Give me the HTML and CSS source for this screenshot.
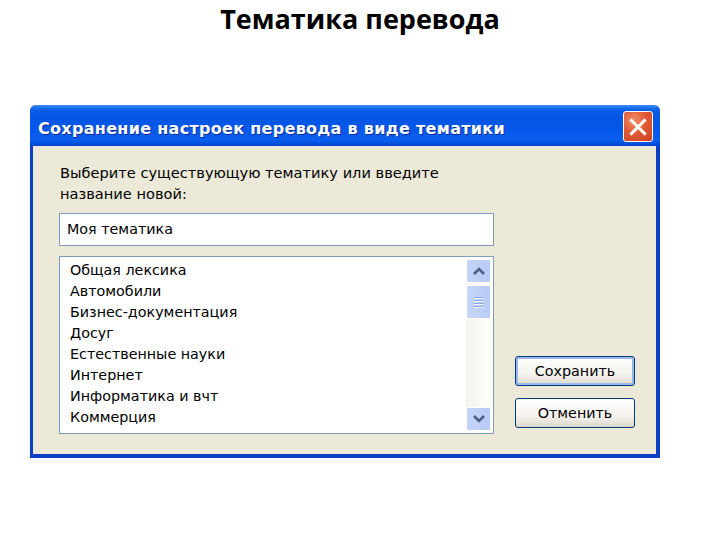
FILE: index.html
```html
<!DOCTYPE html>
<html lang="ru">
<head>
<meta charset="utf-8">
<title>Тематика перевода</title>
<link rel="stylesheet" href="styles.css">
</head>
<body>
<h1 class="page-title">Тематика перевода</h1>
<div class="window">
  <div class="titlebar">
    <span class="titlebar-text">Сохранение настроек перевода в виде тематики</span>
    <span class="close-btn">
      <svg width="30" height="30" viewBox="0 0 30 30">
        <path d="M8 8 L22 22 M22 8 L8 22" stroke="#fff" stroke-width="3.2" stroke-linecap="square"/>
      </svg>
    </span>
  </div>
  <div class="body">
    <div class="left">
      <div class="label">Выберите существующую тематику или введите<br>название новой:</div>
      <div class="input">Моя тематика</div>
      <div class="list">
        <ul class="items">
          <li>Общая лексика</li>
          <li>Автомобили</li>
          <li>Бизнес-документация</li>
          <li>Досуг</li>
          <li>Естественные науки</li>
          <li>Интернет</li>
          <li>Информатика и вчт</li>
          <li>Коммерция</li>
        </ul>
        <div class="scrollbar">
          <div class="sb-btn">
            <svg width="14" height="10" viewBox="0 0 14 10"><path d="M2 8 L7 3 L12 8" fill="none" stroke="#4d6185" stroke-width="2.6"/></svg>
          </div>
          <div class="sb-thumb">
            <span></span><span></span><span></span><span></span>
          </div>
          <div class="sb-track"></div>
          <div class="sb-btn">
            <svg width="14" height="10" viewBox="0 0 14 10"><path d="M2 2 L7 7 L12 2" fill="none" stroke="#4d6185" stroke-width="2.6"/></svg>
          </div>
        </div>
      </div>
    </div>
    <div class="right">
      <div class="button default">Сохранить</div>
      <div class="button">Отменить</div>
    </div>
  </div>
</div>
</body>
</html>
```
FILE: styles.css
```css
html, body {
  margin: 0;
  padding: 0;
  background: #ffffff;
}
body {
  width: 720px;
  height: 540px;
  overflow: hidden;
}
.page-title {
  margin: 0;
  padding-top: 1px;
  height: 105px;
  box-sizing: border-box;
  text-align: center;
  font-family: "Open Sans", "Liberation Sans", sans-serif;
  font-weight: 700;
  font-size: 27px;
  line-height: 36px;
  color: #000;
}
.window {
  margin-left: 30px;
  width: 630px;
  height: 353px;
  box-sizing: border-box;
  background: #ece9d8;
  border-left: 3px solid #0b3fc6;
  border-right: 4px solid #0b3fc6;
  border-bottom: 4px solid #0b3fc6;
  border-radius: 6px 6px 0 0;
  display: flex;
  flex-direction: column;
}
.titlebar {
  height: 41px;
  margin: 0 -4px 0 -3px;
  border-radius: 6px 6px 0 0;
  background: linear-gradient(to bottom, #3d8cf7 0%, #0a5de8 12%, #0456e4 30%, #0558ea 60%, #0a5fef 85%, #0047d1 100%);
  display: flex;
  align-items: center;
  justify-content: space-between;
  padding: 2px 7px 0 8px;
  box-sizing: border-box;
}
.titlebar-text {
  color: #fff;
  font-family: "DejaVu Sans", sans-serif;
  font-weight: 700;
  font-size: 16px;
  letter-spacing: 0.3px;
  padding-top: 4px;
  text-shadow: 1px 1px 0 #0b2b9a;
}
.close-btn {
  width: 30px;
  height: 31px;
  box-sizing: border-box;
  border: 1px solid #fff;
  border-radius: 3px;
  background: radial-gradient(circle at 35% 30%, #f0906c 0%, #e25a36 45%, #c9401e 100%);
  display: flex;
  align-items: center;
  justify-content: center;
}
.close-btn svg { display: block; }
.body {
  flex: 1;
  display: flex;
  padding: 16px 0 20px 26px;
}
.left {
  width: 435px;
  display: flex;
  flex-direction: column;
}
.label {
  font-family: "DejaVu Sans", sans-serif;
  font-size: 14.6px;
  line-height: 21px;
  height: 41px;
  color: #000;
  padding-left: 1px;
}
.input {
  margin-top: 10px;
  height: 33px;
  box-sizing: border-box;
  border: 1px solid #7f9db9;
  background: #fff;
  font-family: "DejaVu Sans", sans-serif;
  font-size: 14.3px;
  line-height: 31px;
  padding-left: 7px;
}
.list {
  margin-top: 10px;
  height: 178px;
  box-sizing: border-box;
  border: 1px solid #7f9db9;
  background: #fff;
  display: flex;
  justify-content: space-between;
  padding: 2px 2px 2px 0;
}
.items {
  list-style: none;
  margin: 0;
  padding: 1px 0 0 10px;
  font-family: "DejaVu Sans", sans-serif;
  font-size: 14.3px;
  line-height: 21px;
  color: #000;
}
.scrollbar {
  width: 25px;
  display: flex;
  flex-direction: column;
  background: linear-gradient(to right, #f4f3ee, #fefefb);
}
.sb-btn {
  height: 24px;
  box-sizing: border-box;
  border: 1px solid #fff;
  border-radius: 2px;
  background: linear-gradient(to right, #c4d4f8, #b9cbf5);
  display: flex;
  align-items: center;
  justify-content: center;
}
.sb-thumb {
  margin-top: 2px;
  height: 34px;
  box-sizing: border-box;
  border: 1px solid #fff;
  border-radius: 2px;
  background: linear-gradient(to right, #c8d7fa, #b8cbf6);
  display: flex;
  flex-direction: column;
  align-items: center;
  justify-content: center;
  gap: 2px;
}
.sb-thumb span {
  display: block;
  width: 9px;
  height: 1px;
  background: #8ea8e6;
  box-shadow: 0 1px 0 #eef3fd;
}
.sb-track {
  flex: 1;
}
.right {
  margin-left: 21px;
  display: flex;
  flex-direction: column;
  justify-content: flex-end;
  gap: 12px;
  padding-bottom: 6px;
}
.button {
  width: 120px;
  height: 30px;
  box-sizing: border-box;
  border: 1px solid #003c74;
  border-radius: 3px;
  background: linear-gradient(to bottom, #ffffff 0%, #f4f3ee 60%, #dcd9cc 100%);
  font-family: "DejaVu Sans", sans-serif;
  font-size: 14.3px;
  line-height: 28px;
  text-align: center;
  color: #000;
}
.button.default {
  box-shadow: inset 0 0 0 2px #9ab8f0;
}
```
